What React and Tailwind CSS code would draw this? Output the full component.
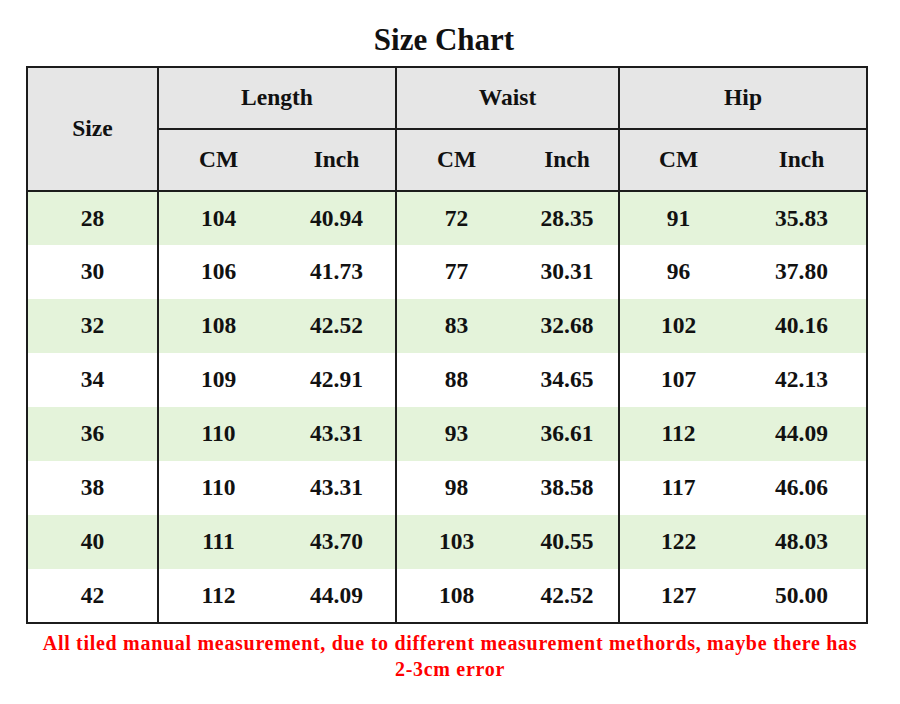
import React from "react";

const rows = [
  ["28", "104", "40.94", "72", "28.35", "91", "35.83"],
  ["30", "106", "41.73", "77", "30.31", "96", "37.80"],
  ["32", "108", "42.52", "83", "32.68", "102", "40.16"],
  ["34", "109", "42.91", "88", "34.65", "107", "42.13"],
  ["36", "110", "43.31", "93", "36.61", "112", "44.09"],
  ["38", "110", "43.31", "98", "38.58", "117", "46.06"],
  ["40", "111", "43.70", "103", "40.55", "122", "48.03"],
  ["42", "112", "44.09", "108", "42.52", "127", "50.00"],
];

// which cells close a group (get a right border)
const groupEnd = [true, false, true, false, true, false, false];

const App = () => {
  return (
    <div className="w-[900px] h-[704px] bg-white text-[#111] font-['Liberation_Serif'] font-bold">
      <h1 className="text-[31px] leading-[36px] text-center pt-[22px] pb-[8px] ml-[-12px]">
        Size Chart
      </h1>

      <table className="ml-[26px] w-[840px] table-fixed border-collapse border-2 border-[#1c1c1c] text-[23.5px]">
        <colgroup>
          <col className="w-[131px]" />
          <col className="w-[120px]" />
          <col className="w-[118px]" />
          <col className="w-[120px]" />
          <col className="w-[103px]" />
          <col className="w-[118px]" />
          <col className="w-[130px]" />
        </colgroup>
        <thead className="bg-[#e6e6e6]">
          <tr className="h-[62px]">
            <th
              rowSpan={2}
              className="border-r-2 border-b-2 border-[#1c1c1c] font-bold"
            >
              Size
            </th>
            <th colSpan={2} className="border-r-2 border-b-2 border-[#1c1c1c]">
              Length
            </th>
            <th colSpan={2} className="border-r-2 border-b-2 border-[#1c1c1c]">
              Waist
            </th>
            <th colSpan={2} className="border-b-2 border-[#1c1c1c]">
              Hip
            </th>
          </tr>
          <tr className="h-[62px]">
            <th className="border-b-2 border-[#1c1c1c]">CM</th>
            <th className="border-r-2 border-b-2 border-[#1c1c1c]">Inch</th>
            <th className="border-b-2 border-[#1c1c1c]">CM</th>
            <th className="border-r-2 border-b-2 border-[#1c1c1c]">Inch</th>
            <th className="border-b-2 border-[#1c1c1c]">CM</th>
            <th className="border-b-2 border-[#1c1c1c]">Inch</th>
          </tr>
        </thead>
        <tbody>
          {rows.map((row, i) => (
            <tr
              key={row[0]}
              className={
                i % 2 === 0 ? "h-[54px] bg-[#e4f3da]" : "h-[54px] bg-white"
              }
            >
              {row.map((cell, j) => (
                <td
                  key={j}
                  className={
                    groupEnd[j]
                      ? "text-center border-r-2 border-[#1c1c1c] p-0"
                      : "text-center p-0"
                  }
                >
                  {cell}
                </td>
              ))}
            </tr>
          ))}
        </tbody>
      </table>

      <p className="text-[#ff0000] text-[20px] tracking-[0.7px] leading-[26px] text-center mt-[6px] px-[10px]">
        All tiled manual measurement, due to different measurement methords,
        maybe there has
        <br />
        2-3cm error
      </p>
    </div>
  );
};

export default App;
